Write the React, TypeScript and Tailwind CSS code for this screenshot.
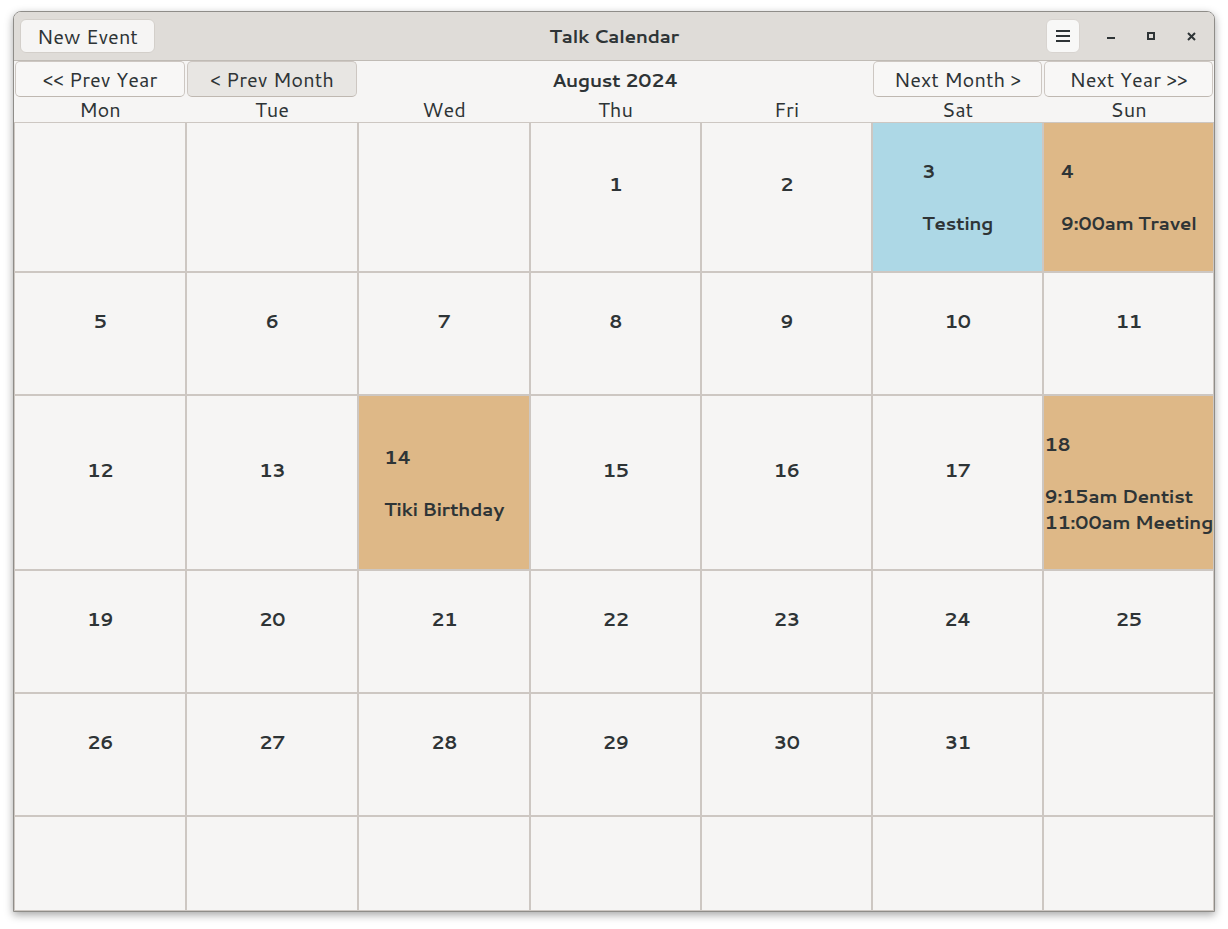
import React from "react";

type Cell = { day?: number; events?: string[]; bg?: string };

const dayNames = ["Mon", "Tue", "Wed", "Thu", "Fri", "Sat", "Sun"];

const special: Record<number, { events: string[]; bg: string }> = {
  3: { events: ["Testing"], bg: "bg-[#add8e6]" },
  4: { events: ["9:00am Travel"], bg: "bg-[#deb887]" },
  14: { events: ["Tiki Birthday"], bg: "bg-[#deb887]" },
  18: { events: ["9:15am Dentist", "11:00am Meeting"], bg: "bg-[#deb887]" },
};

// August 2024 starts on a Thursday
const cells: Cell[] = Array.from({ length: 42 }, (_, i) => {
  const d = i - 2;
  if (d < 1 || d > 31) return {};
  return { day: d, ...special[d] };
});

const cols = "grid-cols-[172px_172px_172px_171px_171px_171px_171px]";

function NavButton({ label, dim }: { label: string; dim?: boolean }) {
  return (
    <button
      className={`h-[36px] mx-px rounded-[5px] border border-[#cdc7c2] border-b-[#bfb8b1] text-[20px] text-[#2e3436] ${
        dim ? "bg-[#e8e6e3]" : "bg-[#f8f7f6]"
      }`}
    >
      {label}
    </button>
  );
}

export default function App() {
  return (
    <div className="w-[1228px] h-[929px] bg-white pt-[11px] pl-[13px] font-['Cantarell','Noto_Sans',sans-serif] text-[#2e3436]">
      <div className="w-[1202px] h-[901px] flex flex-col border border-[#8f8d89] rounded-t-[8px] bg-[#f6f5f4] shadow-[0_3px_9px_rgba(0,0,0,0.35)] overflow-hidden">
        {/* header bar */}
        <div className="h-[49px] shrink-0 grid grid-cols-[1fr_auto_1fr] items-center bg-[#dfdcd8] border-b border-[#c0bbb5] px-[6px]">
          <div className="flex">
            <button className="h-[34px] px-[16px] rounded-[6px] bg-[#f6f5f4] border border-[#d3cfca] text-[20px] leading-none">
              New Event
            </button>
          </div>
          <div className="text-[19px] font-bold tracking-[-0.5px] pt-[1px]">Talk Calendar</div>
          <div className="flex items-center justify-end pr-[5px]">
            <button className="w-[34px] h-[34px] rounded-[6px] bg-[#f8f8f7] border border-[#d8d4d0] flex items-center justify-center">
              <svg width="14" height="14" viewBox="0 0 14 14">
                <rect x="0" y="1" width="14" height="2" fill="#2e3436" />
                <rect x="0" y="6" width="14" height="2" fill="#2e3436" />
                <rect x="0" y="11" width="14" height="2" fill="#2e3436" />
              </svg>
            </button>
            <div className="ml-[19px] w-[24px] h-[24px] flex items-center justify-center">
              <svg width="8" height="8" viewBox="0 0 8 8">
                <rect x="0" y="5" width="8" height="2" fill="#2e3436" />
              </svg>
            </div>
            <div className="ml-[16px] w-[24px] h-[24px] flex items-center justify-center">
              <svg width="8" height="8" viewBox="0 0 8 8">
                <rect x="1" y="1" width="6" height="6" fill="none" stroke="#2e3436" strokeWidth="2" />
              </svg>
            </div>
            <div className="ml-[16px] w-[24px] h-[24px] flex items-center justify-center">
              <svg width="9" height="9" viewBox="0 0 9 9">
                <path d="M1 1L8 8M8 1L1 8" stroke="#2e3436" strokeWidth="2" />
              </svg>
            </div>
          </div>
        </div>

        {/* navigation */}
        <div className={`grid ${cols} h-[36px] shrink-0`}>
          <NavButton label="<< Prev Year" />
          <NavButton label="< Prev Month" dim />
          <div className="col-span-3 flex items-center justify-center pt-[3px] text-[19px] font-bold tracking-[-0.5px]">
            August 2024
          </div>
          <NavButton label="Next Month >" />
          <NavButton label="Next Year >>" />
        </div>

        {/* day names */}
        <div className={`grid ${cols} h-[25px] shrink-0`}>
          {dayNames.map((d) => (
            <div key={d} className="text-center text-[20px] leading-[25px]">
              {d}
            </div>
          ))}
        </div>

        {/* month grid */}
        <div className={`flex-1 grid ${cols} grid-rows-[150px_123px_175px_123px_123px_95px]`}>
          {cells.map((c, i) => (
            <div
              key={i}
              className={`flex items-center justify-center border border-[#cdc7c2] ${c.bg ?? ""}`}
            >
              {c.day && (
                <div className="text-left text-[19px] font-bold tracking-[-0.5px] leading-[26px] whitespace-nowrap">
                  <div>{c.day}</div>
                  <div className="h-[26px]" />
                  {c.events?.map((e) => (
                    <div key={e}>{e}</div>
                  ))}
                </div>
              )}
            </div>
          ))}
        </div>
      </div>
    </div>
  );
}
